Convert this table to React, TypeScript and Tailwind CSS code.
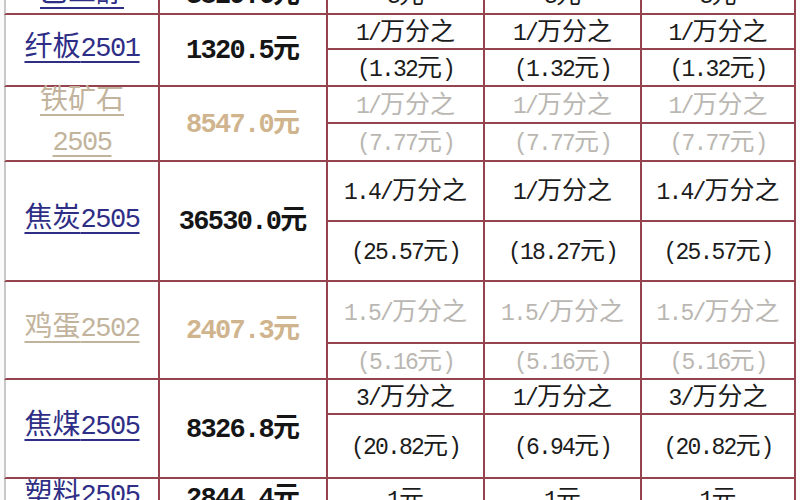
import React from 'react';

type Row = {
  name: string[];
  value: string;
  rates: [string, string][];
  faded?: boolean;
};

const rows: Row[] = [
  { name: ['纤板2501'], value: '1320.5元', rates: [['1/万分之', '(1.32元)'], ['1/万分之', '(1.32元)'], ['1/万分之', '(1.32元)']] },
  { name: ['铁矿石', '2505'], value: '8547.0元', rates: [['1/万分之', '(7.77元)'], ['1/万分之', '(7.77元)'], ['1/万分之', '(7.77元)']], faded: true },
  { name: ['焦炭2505'], value: '36530.0元', rates: [['1.4/万分之', '(25.57元)'], ['1/万分之', '(18.27元)'], ['1.4/万分之', '(25.57元)']] },
  { name: ['鸡蛋2502'], value: '2407.3元', rates: [['1.5/万分之', '(5.16元)'], ['1.5/万分之', '(5.16元)'], ['1.5/万分之', '(5.16元)']], faded: true },
  { name: ['焦煤2505'], value: '8326.8元', rates: [['3/万分之', '(20.82元)'], ['1/万分之', '(6.94元)'], ['3/万分之', '(20.82元)']] },
];

// SimSun-like look: CJK at full size, Latin/digits narrow (half width)
function T({ s, kind, className = '' }: { s: string; kind: 'name' | 'value' | 'rate'; className?: string }) {
  const parts = s.split(/([\u4e00-\u9fff]+)/).filter(Boolean);
  return (
    <span className={`leading-none ${className}`}>
      {parts.map((p, i) => {
        const cjk = /[\u4e00-\u9fff]/.test(p);
        let cls = '';
        if (kind === 'name') cls = cjk ? 'text-[28px]' : 'text-[27px] tracking-[-1.45px]';
        if (kind === 'value') cls = cjk ? 'text-[27px]' : 'text-[27px] tracking-[-1.7px]';
        if (kind === 'rate') cls = cjk ? 'text-[25px]' : 'text-[23px] tracking-[-1.8px]';
        return (
          <span key={i} className={cls}>
            {p}
          </span>
        );
      })}
    </span>
  );
}

const cell = 'flex items-center justify-center border-b-2 border-r-2 border-[#94434f] text-center leading-none';
const nameCol = 'border-l-2 border-l-[#c8c8c8]';
const nameTxt = 'underline underline-offset-[5px] decoration-[1.5px] !leading-[38px]';

export default function App() {
  return (
    <div className="w-[800px] h-[500px] overflow-hidden bg-[#fbfbfb] font-['Liberation_Mono','Noto_Sans_CJK_SC',monospace]">
      <div className="grid grid-cols-[156px_168px_157px_157px_154px] grid-rows-[38px_35px_37px_37px_38px_60px_60px_62px_36px_35px_64px_44px] bg-white ml-[4px] -mt-[23px] w-[792px]">
        {/* partially visible top row */}
        <div className={`${cell} ${nameCol} pt-[3px] text-[#2e2e86]`}>
          <T s="乙二醇" kind="name" className={nameTxt} />
        </div>
        <div className={`${cell} pt-[3px] font-bold text-[#151515]`}><T s="3829.6元" kind="value" /></div>
        <div className={`${cell} pt-[3px] text-[#1c1c1c]`}><T s="3元" kind="rate" /></div>
        <div className={`${cell} pt-[3px] text-[#1c1c1c]`}><T s="3元" kind="rate" /></div>
        <div className={`${cell} pt-[3px] text-[#1c1c1c]`}><T s="3元" kind="rate" /></div>

        {rows.map((r, idx) => {
          const rateColor = r.faded ? 'text-[#bab7b2]' : 'text-[#1c1c1c]';
          return (
            <React.Fragment key={idx}>
              <div className={`${cell} ${nameCol} row-span-2 flex-col ${r.faded ? 'text-[#c2b49c]' : 'text-[#2e2e86]'}`}>
                {r.name.map((n, i) => (
                  <T key={i} s={n} kind="name" className={nameTxt} />
                ))}
              </div>
              <div className={`${cell} row-span-2 pt-[3px] font-bold ${r.faded ? 'text-[#cfb48e]' : 'text-[#151515]'}`}>
                <T s={r.value} kind="value" />
              </div>
              {r.rates.map((rt, i) => (
                <div key={`a${i}`} className={`${cell} pt-[3px] ${rateColor}`}><T s={rt[0]} kind="rate" /></div>
              ))}
              {r.rates.map((rt, i) => (
                <div key={`b${i}`} className={`${cell} pt-[3px] ${rateColor}`}><T s={rt[1]} kind="rate" /></div>
              ))}
            </React.Fragment>
          );
        })}

        {/* partially visible bottom row */}
        <div className={`${cell} ${nameCol} items-start pt-[3px] text-[#2e2e86]`}>
          <T s="塑料2505" kind="name" className="underline underline-offset-[5px] decoration-[1.5px]" />
        </div>
        <div className={`${cell} items-start pt-[7px] font-bold text-[#151515]`}><T s="2844.4元" kind="value" /></div>
        <div className={`${cell} items-start pt-[9px] text-[#1c1c1c]`}><T s="1元" kind="rate" /></div>
        <div className={`${cell} items-start pt-[9px] text-[#1c1c1c]`}><T s="1元" kind="rate" /></div>
        <div className={`${cell} items-start pt-[9px] text-[#1c1c1c]`}><T s="1元" kind="rate" /></div>
      </div>
    </div>
  );
}
